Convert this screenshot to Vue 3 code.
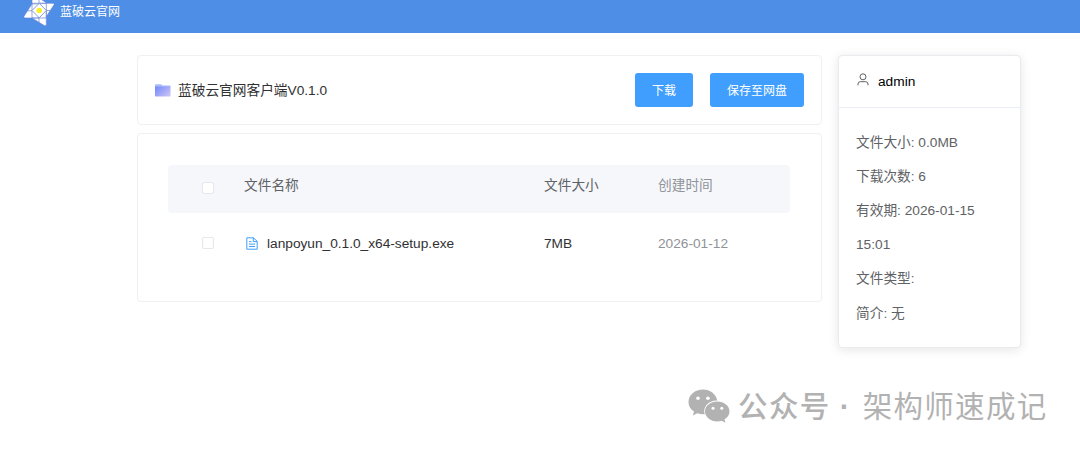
<template>
  <div class="page">
    <header class="top-bar">
      <svg class="logo" viewBox="0 0 32 34" fill="none">
        <g fill="#fff" stroke="#6482d8" stroke-width="0.6" stroke-linejoin="round">
          <path d="M9 1.5L10.5 1.5L23 9.5V18H9Z" />
          <path d="M16 10.3H30.5L31.2 11.5L23 24H16Z" />
          <path d="M23.3 17V32L22 33L9 25V17Z" />
          <path d="M16 25H1.5L.8 23.5L9 11H16Z" />
        </g>
        <path d="M9 10.3H23.3V25H9ZM16 5V11M23.3 17.5H27.3M16 24V29.3M9 17.8H4.5" stroke="#6482d8" stroke-width="0.7" />
        <path d="M16.2 10.3L23.3 17.5L16.2 24.8L9 17.5Z" fill="#fff" stroke="#7890d0" stroke-width="0.9" />
        <circle cx="16.2" cy="17.5" r="2.7" fill="#f8f020" />
      </svg>
      <span class="brand">蓝破云官网</span>
    </header>

    <main class="content">
      <div class="main-column">
        <section class="card title-card">
          <svg class="folder-icon" viewBox="0 0 16 13">
            <defs>
              <linearGradient id="folderFill" x1="0" y1="0" x2="1" y2="0.7">
                <stop offset="0" stop-color="#7187fb" />
                <stop offset="1" stop-color="#c5c0f5" />
              </linearGradient>
            </defs>
            <path d="M0 1Q0 .3 .7 .3H6L7.5 1.5H14.5Q15.5 1.5 15.5 2.5V3H0Z" fill="#a9bcfb" />
            <path d="M0 2.5H15.5V11.7Q15.5 12.5 14.7 12.5H.8Q0 12.5 0 11.7Z" fill="url(#folderFill)" />
          </svg>
          <h1>蓝破云官网客户端V0.1.0</h1>
          <div class="actions">
            <button type="button">下载</button>
            <button type="button">保存至网盘</button>
          </div>
        </section>

        <section class="card list-card">
          <div class="row row-head">
            <span class="check" :class="{ checked: allChecked }" @click="toggleAll"></span>
            <span class="name">文件名称</span>
            <span class="size">文件大小</span>
            <span class="date">创建时间</span>
          </div>
          <div v-for="file in files" :key="file.name" class="row">
            <span class="check" :class="{ checked: file.checked }" @click="file.checked = !file.checked"></span>
            <span class="name">
              <svg class="doc-icon" viewBox="0 0 12 13" fill="none" stroke="#409eff" stroke-width="1">
                <path d="M.8 .8H7.5L11.2 4.4V12.2H.8ZM7.3 .8V4.6H11.2M3 4.7H5.5M3 7.1H9M3 9.5H9" />
              </svg>
              {{ file.name }}
            </span>
            <span class="size">{{ file.size }}</span>
            <span class="date">{{ file.date }}</span>
          </div>
        </section>
      </div>

      <aside class="info-card">
        <div class="user">
          <svg class="user-icon" viewBox="0 0 12 13" fill="none" stroke="#606266" stroke-width="1">
            <circle cx="6" cy="3.8" r="3" />
            <path d="M1 12.3V11Q1 8.7 3.3 8.7H8.7Q11 8.7 11 11V12.3" />
          </svg>
          <span>admin</span>
        </div>
        <div class="details">
          <p v-for="item in details" :key="item.label">{{ item.label }}: {{ item.value }}</p>
        </div>
      </aside>
    </main>

    <div class="watermark">
      <svg class="chat-icon" viewBox="0 0 42 34">
        <path d="M15 .5C6.9 .5.5 6 .5 13C.5 17 2.6 20.4 6 22.6L4.8 26.5L9.4 24.3C12 25.3 14.5 25.4 16.7 25.2C14.5 18 20.5 11.3 29.3 11.6C28 5 22.2 .5 15 .5Z" fill="#b2b2b2" />
        <path d="M29.3 12.6C22.4 12.6 17 17 17 22.5S22.4 32.4 29.3 32.4C31 32.4 32.4 32.1 33.8 31.7L37.4 33.7L36.5 30.3C39.5 28.5 41.5 25.7 41.5 22.5C41.5 17 36.2 12.6 29.3 12.6Z" fill="#b2b2b2" />
        <g fill="#fff">
          <circle cx="10" cy="9.2" r="1.8" />
          <circle cx="19.9" cy="9.2" r="1.8" />
          <circle cx="25" cy="19.3" r="1.5" />
          <circle cx="33.8" cy="19.3" r="1.5" />
        </g>
      </svg>
      <span class="account">公众号</span>
      <span class="dot">·</span>
      <span class="account-name">架构师速成记</span>
    </div>
  </div>
</template>

<script setup>
import { computed, ref } from 'vue'

const files = ref([
  { name: 'lanpoyun_0.1.0_x64-setup.exe', size: '7MB', date: '2026-01-12', checked: false }
])

const details = [
  { label: '文件大小', value: '0.0MB' },
  { label: '下载次数', value: '6' },
  { label: '有效期', value: '2026-01-15 15:01' },
  { label: '文件类型', value: '' },
  { label: '简介', value: '无' }
]

const allChecked = computed(() => files.value.every((file) => file.checked))

function toggleAll() {
  const next = !allChecked.value
  files.value.forEach((file) => { file.checked = next })
}
</script>

<style>
body { margin: 0; background: #fff; }
</style>

<style scoped>
.page {
  position: relative;
  height: 450px;
  overflow: hidden;
  font-family: "Liberation Sans", "Noto Sans CJK SC", sans-serif;
  font-size: 13.7px;
  color: #303133;
}

.page * { box-sizing: border-box; }

.top-bar {
  display: flex;
  align-items: flex-start;
  height: 33px;
  padding-left: 23px;
  overflow: hidden;
  background: #4e8ee6;
}

.logo {
  width: 32px;
  height: 34px;
  margin-top: -7px;
  flex: none;
}

.brand {
  margin-left: 5px;
  font-size: 12px;
  line-height: 24px;
  color: #fff;
}

.content {
  display: flex;
  align-items: flex-start;
  gap: 16px;
  padding: 22px 58px 0 137px;
}

.main-column {
  display: grid;
  gap: 8px;
  width: 685px;
}

.card {
  border: 1px solid #eff0f2;
  border-radius: 4px;
  background: #fff;
}

.title-card {
  display: flex;
  align-items: center;
  height: 70px;
  padding: 0 17px;
}

.folder-icon {
  width: 16px;
  height: 13px;
}

.title-card h1 {
  margin: 0 0 2px 7px;
  font-size: 13.7px;
  font-weight: 400;
}

.actions {
  display: flex;
  gap: 17px;
  margin-left: auto;
}

.actions button {
  height: 34px;
  padding: 0 17px 2px;
  border: 0;
  border-radius: 3px;
  background: #409eff;
  color: #fff;
  font: inherit;
  font-size: 12px;
  cursor: pointer;
}

.list-card {
  height: 169px;
  padding: 31px 31px 0 30px;
}

.row {
  display: grid;
  grid-template-columns: 76px 300px 114px 1fr;
  align-items: center;
  height: 60px;
}

.row-head {
  height: 48px;
  padding-bottom: 10px;
  border-radius: 4px;
  background: #f5f7fa;
  color: #606266;
}

.check {
  width: 12px;
  height: 12px;
  margin-left: 34px;
  border: 1px solid #e4e7ed;
  border-radius: 2px;
  background: #fff;
}

.row-head .check { margin-top: 8px; }
.check.checked { background: #409eff; border-color: #409eff; }

.name {
  display: flex;
  align-items: center;
}

.doc-icon {
  width: 12px;
  height: 13px;
  margin: 0 9px 0 2px;
}

.date { color: #909399; }

.info-card {
  width: 183px;
  height: 293px;
  border: 1px solid #e9ebef;
  border-radius: 4px;
  background: #fff;
  box-shadow: 0 2px 11px rgba(0, 0, 0, 0.1);
}

.user {
  display: flex;
  align-items: center;
  height: 52px;
  padding-left: 18px;
  border-bottom: 1px solid #ebeef5;
  color: #000;
}

.user-icon {
  width: 12px;
  height: 13px;
  margin: 0 9px 5px 0;
}

.details {
  padding: 17.5px 17px;
  color: #606266;
  line-height: 34.2px;
}

.details p { margin: 0; }

/* Account mark floating over the lower right corner */
.watermark {
  position: absolute;
  left: 688px;
  top: 385px;
  display: flex;
  align-items: center;
  height: 42px;
  font-size: 29.5px;
  line-height: 42px;
  color: #b2b2b2;
  white-space: nowrap;
}

.watermark span { padding-top: 2px; }

.chat-icon {
  width: 42px;
  height: 34px;
}

.account {
  margin-left: 8px;
  letter-spacing: 1.4px;
  font-weight: 500;
}

.dot {
  width: 31px;
  padding-right: 3px;
  text-align: center;
  font-weight: 700;
}

.account-name {
  margin-left: 1px;
  letter-spacing: 1.3px;
}
</style>
